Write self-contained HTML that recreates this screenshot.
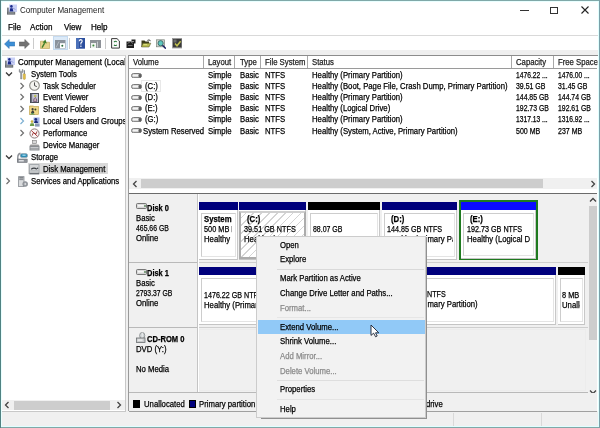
<!DOCTYPE html>
<html><head><meta charset="utf-8">
<style>
*{margin:0;padding:0;box-sizing:border-box}
html,body{width:600px;height:428px;overflow:hidden;background:#fff;font-family:"Liberation Sans",sans-serif;font-size:8.7px;color:#000}
.a{position:absolute}
.t{position:absolute;white-space:nowrap;line-height:10px;height:10px;transform-origin:0 0;transform:scaleX(.89);-webkit-text-stroke:0.25px currentColor}
.b{font-weight:bold}
.g{color:#8a8a8a}
</style></head><body>
<div class="a" style="left:0px;top:0px;width:600px;height:428px;background:#fff"></div>
<div class="t " style="left:20px;top:5.00px;transform:scaleX(0.890);font-size:9px;color:#222;-webkit-text-stroke:0">Computer Management</div>
<div class="a" style="left:520px;top:9.6px;width:8.5px;height:1.2px;background:#333"></div>
<div class="a" style="left:550px;top:6.5px;width:7.5px;height:7.5px;border:1.2px solid #333"></div>
<svg class="a" style="left:580.5px;top:6px" width="8" height="8"><path d="M0.5 0.5L7.5 7.5M7.5 0.5L0.5 7.5" stroke="#222" stroke-width="1.1"/></svg>
<div class="t " style="left:8px;top:22.40px;transform:scaleX(0.930);">File</div>
<div class="t " style="left:30px;top:22.40px;transform:scaleX(0.930);">Action</div>
<div class="t " style="left:64px;top:22.40px;transform:scaleX(0.930);">View</div>
<div class="t " style="left:91px;top:22.40px;transform:scaleX(0.930);">Help</div>
<div class="a" style="left:2px;top:35px;width:596px;height:1px;background:#d9d9d9"></div>
<div class="a" style="left:2px;top:50px;width:596px;height:5px;background:#efefef"></div>
<div class="a" style="left:2px;top:55px;width:596px;height:371px;background:#f0f0f0"></div>
<svg class="a" style="left:5.5px;top:4px" width="11" height="11" viewBox="0 0 11 11"><rect x="3" y="0.5" width="8" height="7.5" fill="#c9d0f6"/><circle cx="5.4" cy="2.4" r="1.3" fill="#1a2a8a"/><path d="M3.6 7.6L4.2 4.2L6.6 4.2L7.4 7.6Z" fill="#1a2a8a"/><path d="M6.6 4L9.5 5.5" stroke="#7a86c8" stroke-width="0.6"/><rect x="1" y="3.6" width="1.8" height="4.4" fill="#7a8088"/><rect x="1" y="7.8" width="8.2" height="2.8" fill="#62666c"/><rect x="1.8" y="8.6" width="6.6" height="0.8" fill="#b4b8bc"/></svg>
<svg class="a" style="left:3.5px;top:39px" width="11" height="10" viewBox="0 0 11 10"><path d="M0.5 5L5.2 0.5L5.2 3L10.8 3L10.8 7L5.2 7L5.2 9.5Z" fill="#3c8fd6" stroke="#2a6aa8" stroke-width="0.5"/></svg>
<svg class="a" style="left:19px;top:39px" width="11" height="10" viewBox="0 0 11 10"><path d="M10.5 5L5.8 0.5L5.8 3L0.2 3L0.2 7L5.8 7L5.8 9.5Z" fill="#727272" stroke="#5a5a5a" stroke-width="0.5"/></svg>
<div class="a" style="left:33.3px;top:37.6px;width:1.2px;height:11.4px;background:#cbcbcb"></div>
<svg class="a" style="left:39.8px;top:39px" width="10" height="10" viewBox="0 0 10 10"><path d="M0.5 2.2L3.8 2.2L4.8 3.2L9.5 3.2L9.5 9.5L0.5 9.5Z" fill="#e6d48a" stroke="#b8a050" stroke-width="0.6"/><path d="M2 8.6L4.6 4.2" stroke="#3f7f2a" stroke-width="1.4"/><path d="M2.6 3.6L5.4 0.6L6.8 4.6Z" fill="#3f7f2a"/></svg>
<div class="a" style="left:52.8px;top:36px;width:15px;height:14.2px;background:#dceaf8;border:1px solid #c4daf0"></div>
<svg class="a" style="left:55.2px;top:40px" width="10.5" height="8.5" viewBox="0 0 10.5 8.5"><rect x="0" y="0" width="10.5" height="8.5" fill="#8a929c"/><rect x="5" y="3.2" width="5" height="5" fill="#fff"/><circle cx="7.3" cy="5.8" r="1" fill="#2a6a3a"/><path d="M1 7.5L4 1.5" stroke="#b8c0c8" stroke-width="0.8"/></svg>
<div class="a" style="left:69.3px;top:37.6px;width:1.2px;height:11.4px;background:#cbcbcb"></div>
<svg class="a" style="left:76px;top:38px" width="9" height="10.7" viewBox="0 0 9 10.7"><rect x="0" y="0" width="9" height="10.7" fill="#2c4f9e"/><rect x="0" y="0" width="3" height="10.7" fill="#4a70b8"/><path d="M3.2 3.2Q3.4 1.6 4.8 1.6Q6.3 1.8 6.2 3.2Q6 4.2 4.9 5L4.9 6.6" fill="none" stroke="#fff" stroke-width="1.1"/><rect x="4.3" y="7.6" width="1.2" height="1.3" fill="#fff"/></svg>
<svg class="a" style="left:90px;top:40px" width="11" height="8.3" viewBox="0 0 11 8.3"><rect x="0" y="0" width="11" height="8.3" fill="#8e9298"/><rect x="1" y="3" width="5" height="5" fill="#f0f4f0"/><circle cx="3.4" cy="5.6" r="1" fill="#3a8a3a"/><rect x="7" y="1.6" width="1" height="6" fill="#c8ccd0"/></svg>
<div class="a" style="left:105.3px;top:38px;width:1.2px;height:11px;background:#cbcbcb"></div>
<svg class="a" style="left:111.3px;top:38px" width="9" height="10.7" viewBox="0 0 9 10.7"><path d="M0.6 0.6L6 0.6L8.4 3L8.4 10.1L0.6 10.1Z" fill="#fafafa" stroke="#3a3a3a" stroke-width="1"/><path d="M3 4Q4.4 2.6 5.8 3.8" fill="none" stroke="#2a7a3a" stroke-width="1.1"/><path d="M5.8 6.8Q4.4 8.2 3 7" fill="none" stroke="#2a7a3a" stroke-width="1.1"/></svg>
<svg class="a" style="left:126px;top:39px" width="10" height="9" viewBox="0 0 10 9"><rect x="0.5" y="2.5" width="7.5" height="6.5" fill="#1e1e1e"/><path d="M1.5 4.5L4.5 2.5L7 4.5" fill="none" stroke="#8a8a8a" stroke-width="0.8"/><rect x="2" y="6" width="4.5" height="1" fill="#6a6a6a"/><path d="M5.5 0.5L9.5 0.5L9.5 4.5L8 4.5L8 2L5.5 2Z" fill="#1e1e1e"/></svg>
<svg class="a" style="left:141.2px;top:39px" width="10.5" height="8.5" viewBox="0 0 10.5 8.5"><path d="M0.5 1.5L3.5 1.5L4.5 2.5L8 2.5L8 8L0.5 8Z" fill="#3a3a1a"/><path d="M1.8 4.2L9.8 4.2L8 8L0.5 8Z" fill="#b8bc50" stroke="#4a4a20" stroke-width="0.5"/><path d="M2.5 5.6L6 5.6" stroke="#e8e890" stroke-width="0.8"/><path d="M6.4 1.4Q8 0.2 9.6 1.8" fill="none" stroke="#2a2a2a" stroke-width="0.9"/></svg>
<svg class="a" style="left:155.9px;top:39px" width="10.5" height="10" viewBox="0 0 10.5 10"><rect x="0.5" y="0.8" width="8" height="7" fill="#cfd6cf" stroke="#7a827a" stroke-width="0.7"/><circle cx="4.6" cy="4.2" r="2.6" fill="#5cc8c0" stroke="#3a5a5a" stroke-width="0.8"/><path d="M6.5 6.2L9.8 9.6" stroke="#1a2060" stroke-width="1.5"/></svg>
<svg class="a" style="left:171.8px;top:38.2px" width="10.5" height="10.4" viewBox="0 0 10.5 10.4"><rect x="0.5" y="0.5" width="9.5" height="9.4" fill="#3a3a3a" stroke="#9a9a9a" stroke-width="1"/><rect x="1.5" y="1.5" width="3" height="3" fill="#6a6a6a"/><path d="M3 5.6L5 7.8L8.6 3.2" fill="none" stroke="#c0c050" stroke-width="1.5"/></svg>
<div class="a" style="left:2px;top:55px;width:124px;height:357px;background:#fff;border-top:1px solid #d4d4d4;border-right:1px solid #c8c8c8;border-bottom:1px solid #c8c8c8"></div>
<div class="a" style="left:2px;top:56px;width:123px;height:344px;overflow:hidden">
<div class="t " style="left:16px;top:0.70px;transform:scaleX(0.920);">Computer Management (Local</div>
<svg class="a" style="left:2px;top:1px" width="11" height="11" viewBox="0 0 11 11"><rect x="3" y="0.5" width="8" height="7.5" fill="#c9d0f6"/><circle cx="5.4" cy="2.4" r="1.3" fill="#1a2a8a"/><path d="M3.6 7.6L4.2 4.2L6.6 4.2L7.4 7.6Z" fill="#1a2a8a"/><path d="M6.6 4L9.5 5.5" stroke="#7a86c8" stroke-width="0.6"/><rect x="1" y="3.6" width="1.8" height="4.4" fill="#7a8088"/><rect x="1" y="7.8" width="8.2" height="2.8" fill="#62666c"/><rect x="1.8" y="8.6" width="6.6" height="0.8" fill="#b4b8bc"/></svg>
<div class="t " style="left:28.5px;top:12.60px;transform:scaleX(0.890);">System Tools</div>
<svg class="a" style="left:3.2px;top:14.6px" width="8" height="6"><path d="M1 1.5L4 4.5L7 1.5" fill="none" stroke="#3a3a3a" stroke-width="1.3"/></svg>
<svg class="a" style="left:15.5px;top:13px" width="8" height="11" viewBox="0 0 8 11"><path d="M1.2 0.5L1.2 3L2.6 4.2L2.6 10L3.8 10L3.8 4.2L5 3L5 0.5L4.2 0.5L4.2 2.4L2 2.4L2 0.5Z" fill="#9a9ea4" stroke="#6a6e74" stroke-width="0.4"/><rect x="5.2" y="4.6" width="2.2" height="5.8" rx="1" fill="#e3c24a" stroke="#a8862a" stroke-width="0.4"/><rect x="5.8" y="1.2" width="1" height="3.6" fill="#6a6e74"/></svg>
<div class="t " style="left:41px;top:24.50px;transform:scaleX(0.890);">Task Scheduler</div>
<svg class="a" style="left:17.2px;top:25.5px" width="6" height="8"><path d="M1.5 1L4.5 4L1.5 7" fill="none" stroke="#707070" stroke-width="1.2"/></svg>
<svg class="a" style="left:27px;top:24px" width="11" height="11" viewBox="0 0 11 11"><circle cx="5.5" cy="5.5" r="4.8" fill="#f4f4f0" stroke="#8a8a84" stroke-width="1.1"/><path d="M5.5 2.4L5.5 5.6L7.8 6.6" fill="none" stroke="#3a3a3a" stroke-width="0.9"/></svg>
<div class="t " style="left:41px;top:36.40px;transform:scaleX(0.890);">Event Viewer</div>
<svg class="a" style="left:17.2px;top:37.4px" width="6" height="8"><path d="M1.5 1L4.5 4L1.5 7" fill="none" stroke="#707070" stroke-width="1.2"/></svg>
<svg class="a" style="left:28px;top:37.2px" width="9" height="10" viewBox="0 0 9 10"><rect x="0.5" y="0.5" width="8" height="9" fill="#c4c6d8" stroke="#4a4e58" stroke-width="1"/><rect x="1" y="0.8" width="1.2" height="8.4" fill="#6a6e78"/><circle cx="5.2" cy="3" r="1.3" fill="#bcc060"/><path d="M3.6 8.6Q3.4 5.2 5.2 4.6Q7 5.2 6.8 8.6Z" fill="#c0b0b8" stroke="#6a4a6a" stroke-width="0.8"/></svg>
<div class="t " style="left:41px;top:48.30px;transform:scaleX(0.890);">Shared Folders</div>
<svg class="a" style="left:17.2px;top:49.3px" width="6" height="8"><path d="M1.5 1L4.5 4L1.5 7" fill="none" stroke="#707070" stroke-width="1.2"/></svg>
<svg class="a" style="left:26.7px;top:49px" width="10" height="10" viewBox="0 0 10 10"><rect x="0.5" y="1.5" width="9" height="8" fill="#efd88a" stroke="#b89a40" stroke-width="0.6"/><rect x="0.5" y="0.5" width="4" height="1.5" fill="#d8c070"/><circle cx="3.6" cy="4.2" r="1.1" fill="#3a3a3a"/><path d="M2 8L3 5.6L4.4 5.6L5.4 8Z" fill="#3a3a3a"/><circle cx="6.4" cy="4.6" r="1" fill="#3a4a2a"/><path d="M1 9.5L3.5 7.5L6 9.5Z" fill="#4a8a5a"/></svg>
<div class="t " style="left:41px;top:60.20px;transform:scaleX(0.890);">Local Users and Groups</div>
<svg class="a" style="left:17.2px;top:61.2px" width="6" height="8"><path d="M1.5 1L4.5 4L1.5 7" fill="none" stroke="#7db0d2" stroke-width="1.2"/></svg>
<svg class="a" style="left:27px;top:61px" width="11" height="10" viewBox="0 0 11 10"><rect x="4.5" y="0.5" width="6" height="5.5" fill="#9fb2e8"/><circle cx="6.8" cy="2.2" r="1.3" fill="#1a2a7a"/><path d="M5 6L6 3.6L8 3.6L9.2 6Z" fill="#1a2a7a"/><circle cx="3" cy="4.6" r="1.3" fill="#c9b040"/><path d="M0.8 9L1.6 6.2L4.6 6.2L5.4 9Z" fill="#6a9a4a"/><rect x="6" y="6.4" width="4.6" height="3.2" fill="#8a9ab8"/></svg>
<div class="t " style="left:41px;top:72.10px;transform:scaleX(0.890);">Performance</div>
<svg class="a" style="left:17.2px;top:73.1px" width="6" height="8"><path d="M1.5 1L4.5 4L1.5 7" fill="none" stroke="#707070" stroke-width="1.2"/></svg>
<svg class="a" style="left:27px;top:72px" width="11" height="11" viewBox="0 0 11 11"><circle cx="5.5" cy="5.5" r="4.6" fill="#fbf6f6" stroke="#8a7a7a" stroke-width="1"/><path d="M2.4 2.6L8.6 8.4" stroke="#b03a3a" stroke-width="1"/><path d="M3.2 7.6Q4.4 3 6 5.8Q7 7.4 8 3.4" fill="none" stroke="#8a2020" stroke-width="0.8"/></svg>
<div class="t " style="left:41px;top:84.00px;transform:scaleX(0.890);">Device Manager</div>
<svg class="a" style="left:27px;top:84px" width="11" height="11" viewBox="0 0 11 11"><rect x="3.5" y="0.5" width="4" height="3" fill="#d8d8d8" stroke="#7a7a7a" stroke-width="0.6"/><path d="M1.5 4.5L9.5 4.5L10.5 6L0.5 6Z" fill="#9a9a9a"/><rect x="0.5" y="6" width="10" height="4.5" fill="#8a8e92"/><rect x="1.5" y="7" width="8" height="0.8" fill="#d8dadc"/><rect x="1.5" y="8.6" width="8" height="0.8" fill="#c8cacc"/></svg>
<div class="t " style="left:28.5px;top:95.90px;transform:scaleX(0.890);">Storage</div>
<svg class="a" style="left:3.2px;top:97.9px" width="8" height="6"><path d="M1 1.5L4 4.5L7 1.5" fill="none" stroke="#3a3a3a" stroke-width="1.3"/></svg>
<svg class="a" style="left:14.5px;top:96px" width="11" height="11" viewBox="0 0 11 11"><path d="M3.5 1.2Q0.8 1.8 0.8 5L0.8 10.2" fill="none" stroke="#8a8e94" stroke-width="1.4"/><rect x="0.6" y="7" width="9.6" height="3.6" fill="#8e9298" stroke="#6a6e74" stroke-width="0.5"/><rect x="1.8" y="8.2" width="5" height="1.2" fill="#f0f2f4"/><rect x="3.2" y="1.6" width="7.4" height="4" rx="1.9" fill="#2d8cb4" stroke="#9aa4ac" stroke-width="0.7"/><rect x="5.4" y="2.6" width="3.2" height="1.2" fill="#a8e0f4"/></svg>
<div class="a" style="left:26px;top:107.3px;width:80px;height:11px;background:#d9d9d9"></div>
<div class="t " style="left:41px;top:107.80px;transform:scaleX(0.890);">Disk Management</div>
<svg class="a" style="left:27px;top:108px" width="10.5" height="10.5" viewBox="0 0 10.5 10.5"><rect x="0.6" y="0.6" width="9.4" height="9.4" fill="#d4d6d8" stroke="#9a9ea4" stroke-width="0.8"/><path d="M2.2 5.2Q5 3.2 7.8 5.2" fill="none" stroke="#3a3e44" stroke-width="1.2"/><rect x="1.2" y="6.4" width="8.2" height="1" fill="#a8acb0"/><rect x="0.6" y="8.8" width="9.4" height="1.4" fill="#6a6e74"/><circle cx="8.6" cy="4.2" r="0.7" fill="#3a3e44"/></svg>
<div class="t " style="left:28.5px;top:119.70px;transform:scaleX(0.890);">Services and Applications</div>
<svg class="a" style="left:3.2px;top:120.7px" width="6" height="8"><path d="M1.5 1L4.5 4L1.5 7" fill="none" stroke="#707070" stroke-width="1.2"/></svg>
<svg class="a" style="left:15.8px;top:119.6px" width="10" height="11" viewBox="0 0 10 11"><rect x="0.6" y="0.6" width="5.4" height="10" fill="#dadcde" stroke="#8a8e94" stroke-width="0.8"/><rect x="1.2" y="1.4" width="4.2" height="1" fill="#4a4e54"/><rect x="1.2" y="3.2" width="4.2" height="0.9" fill="#7a7e84"/><circle cx="7.2" cy="8" r="2.5" fill="#9a9ea4" stroke="#7a7e84" stroke-width="0.5"/><circle cx="7.2" cy="8" r="0.8" fill="#fff"/></svg>
</div>
<div class="a" style="left:2px;top:400px;width:123px;height:10px;background:#f0f0f0"></div>
<div class="a" style="left:13.5px;top:400.5px;width:96px;height:9px;background:#cdcdcd"></div>
<svg class="a" style="left:4px;top:401px" width="6" height="8"><path d="M4.5 1L1.5 4L4.5 7" fill="none" stroke="#444" stroke-width="1.3"/></svg>
<svg class="a" style="left:116px;top:401px" width="6" height="8"><path d="M1.5 1L4.5 4L1.5 7" fill="none" stroke="#444" stroke-width="1.3"/></svg>
<div class="a" style="left:128px;top:55px;width:470px;height:356px;background:#fff;border-top:1px solid #8c8c8c;border-left:1px solid #9a9a9a"></div>
<div class="a" style="left:0;top:0;width:600px;height:428px;clip-path:inset(56px 2.4px 16px 129px)">
<div class="a" style="left:129px;top:67.5px;width:468px;height:1px;background:#9a9a9a"></div>
<div class="a" style="left:203px;top:56px;width:1px;height:12px;background:#a8a8a8"></div>
<div class="a" style="left:234px;top:56px;width:1px;height:12px;background:#a8a8a8"></div>
<div class="a" style="left:260px;top:56px;width:1px;height:12px;background:#a8a8a8"></div>
<div class="a" style="left:307px;top:56px;width:1px;height:12px;background:#a8a8a8"></div>
<div class="a" style="left:511px;top:56px;width:1px;height:12px;background:#a8a8a8"></div>
<div class="a" style="left:553px;top:56px;width:1px;height:12px;background:#a8a8a8"></div>
<div class="t " style="left:133px;top:57.30px;transform:scaleX(0.890);color:#222">Volume</div>
<div class="t " style="left:207.5px;top:57.30px;transform:scaleX(0.890);color:#222">Layout</div>
<div class="t " style="left:240px;top:57.30px;transform:scaleX(0.890);color:#222">Type</div>
<div class="t " style="left:265px;top:57.30px;transform:scaleX(0.890);color:#222">File System</div>
<div class="t " style="left:312px;top:57.30px;transform:scaleX(0.890);color:#222">Status</div>
<div class="t " style="left:516px;top:57.30px;transform:scaleX(0.890);color:#222">Capacity</div>
<div class="t " style="left:558px;top:57.30px;transform:scaleX(0.890);color:#222">Free Space</div>
<div class="a" style="left:141px;top:80px;width:20px;height:11.5px;border:1px solid #e8e8e8"></div>
<svg class="a" style="left:130.8px;top:72.7px" width="11" height="5" viewBox="0 0 11 5"><rect x="0.5" y="0.5" width="10" height="4.2" rx="2" fill="#cfcfcf" stroke="#6e6e6e" stroke-width="0.9"/><rect x="2" y="1.6" width="5" height="1.6" fill="#f4f4f4"/><rect x="7.6" y="1" width="2.6" height="3.4" rx="1" fill="#5e5e5e"/></svg>
<div class="t " style="left:207.5px;top:70.00px;transform:scaleX(0.890);">Simple</div>
<div class="t " style="left:240px;top:70.00px;transform:scaleX(0.890);">Basic</div>
<div class="t " style="left:265px;top:70.00px;transform:scaleX(0.890);">NTFS</div>
<div class="t " style="left:312px;top:70.00px;transform:scaleX(0.890);">Healthy (Primary Partition)</div>
<div class="t " style="left:516px;top:70.00px;transform:scaleX(0.770);">1476.22 ...</div>
<div class="t " style="left:558px;top:70.00px;transform:scaleX(0.770);">1476.00 ...</div>
<svg class="a" style="left:130.8px;top:83.8px" width="11" height="5" viewBox="0 0 11 5"><rect x="0.5" y="0.5" width="10" height="4.2" rx="2" fill="#cfcfcf" stroke="#6e6e6e" stroke-width="0.9"/><rect x="2" y="1.6" width="5" height="1.6" fill="#f4f4f4"/><rect x="7.6" y="1" width="2.6" height="3.4" rx="1" fill="#5e5e5e"/></svg>
<div class="t " style="left:144.5px;top:81.10px;transform:scaleX(0.890);">(C:)</div>
<div class="t " style="left:207.5px;top:81.10px;transform:scaleX(0.890);">Simple</div>
<div class="t " style="left:240px;top:81.10px;transform:scaleX(0.890);">Basic</div>
<div class="t " style="left:265px;top:81.10px;transform:scaleX(0.890);">NTFS</div>
<div class="t " style="left:312px;top:81.10px;transform:scaleX(0.890);">Healthy (Boot, Page File, Crash Dump, Primary Partition)</div>
<div class="t " style="left:516px;top:81.10px;transform:scaleX(0.800);">39.51 GB</div>
<div class="t " style="left:558px;top:81.10px;transform:scaleX(0.800);">31.45 GB</div>
<svg class="a" style="left:130.8px;top:94.9px" width="11" height="5" viewBox="0 0 11 5"><rect x="0.5" y="0.5" width="10" height="4.2" rx="2" fill="#cfcfcf" stroke="#6e6e6e" stroke-width="0.9"/><rect x="2" y="1.6" width="5" height="1.6" fill="#f4f4f4"/><rect x="7.6" y="1" width="2.6" height="3.4" rx="1" fill="#5e5e5e"/></svg>
<div class="t " style="left:144.5px;top:92.20px;transform:scaleX(0.890);">(D:)</div>
<div class="t " style="left:207.5px;top:92.20px;transform:scaleX(0.890);">Simple</div>
<div class="t " style="left:240px;top:92.20px;transform:scaleX(0.890);">Basic</div>
<div class="t " style="left:265px;top:92.20px;transform:scaleX(0.890);">NTFS</div>
<div class="t " style="left:312px;top:92.20px;transform:scaleX(0.890);">Healthy (Primary Partition)</div>
<div class="t " style="left:516px;top:92.20px;transform:scaleX(0.791);">144.85 GB</div>
<div class="t " style="left:558px;top:92.20px;transform:scaleX(0.791);">144.74 GB</div>
<svg class="a" style="left:130.8px;top:106.0px" width="11" height="5" viewBox="0 0 11 5"><rect x="0.5" y="0.5" width="10" height="4.2" rx="2" fill="#cfcfcf" stroke="#6e6e6e" stroke-width="0.9"/><rect x="2" y="1.6" width="5" height="1.6" fill="#f4f4f4"/><rect x="7.6" y="1" width="2.6" height="3.4" rx="1" fill="#5e5e5e"/></svg>
<div class="t " style="left:144.5px;top:103.30px;transform:scaleX(0.890);">(E:)</div>
<div class="t " style="left:207.5px;top:103.30px;transform:scaleX(0.890);">Simple</div>
<div class="t " style="left:240px;top:103.30px;transform:scaleX(0.890);">Basic</div>
<div class="t " style="left:265px;top:103.30px;transform:scaleX(0.890);">NTFS</div>
<div class="t " style="left:312px;top:103.30px;transform:scaleX(0.890);">Healthy (Logical Drive)</div>
<div class="t " style="left:516px;top:103.30px;transform:scaleX(0.791);">192.73 GB</div>
<div class="t " style="left:558px;top:103.30px;transform:scaleX(0.791);">192.61 GB</div>
<svg class="a" style="left:130.8px;top:117.1px" width="11" height="5" viewBox="0 0 11 5"><rect x="0.5" y="0.5" width="10" height="4.2" rx="2" fill="#cfcfcf" stroke="#6e6e6e" stroke-width="0.9"/><rect x="2" y="1.6" width="5" height="1.6" fill="#f4f4f4"/><rect x="7.6" y="1" width="2.6" height="3.4" rx="1" fill="#5e5e5e"/></svg>
<div class="t " style="left:144.5px;top:114.40px;transform:scaleX(0.890);">(G:)</div>
<div class="t " style="left:207.5px;top:114.40px;transform:scaleX(0.890);">Simple</div>
<div class="t " style="left:240px;top:114.40px;transform:scaleX(0.890);">Basic</div>
<div class="t " style="left:265px;top:114.40px;transform:scaleX(0.890);">NTFS</div>
<div class="t " style="left:312px;top:114.40px;transform:scaleX(0.890);">Healthy (Primary Partition)</div>
<div class="t " style="left:516px;top:114.40px;transform:scaleX(0.770);">1317.13 ...</div>
<div class="t " style="left:558px;top:114.40px;transform:scaleX(0.770);">1316.92 ...</div>
<svg class="a" style="left:130.8px;top:128.2px" width="11" height="5" viewBox="0 0 11 5"><rect x="0.5" y="0.5" width="10" height="4.2" rx="2" fill="#cfcfcf" stroke="#6e6e6e" stroke-width="0.9"/><rect x="2" y="1.6" width="5" height="1.6" fill="#f4f4f4"/><rect x="7.6" y="1" width="2.6" height="3.4" rx="1" fill="#5e5e5e"/></svg>
<div class="t " style="left:143px;top:125.50px;transform:scaleX(0.890);">System Reserved</div>
<div class="t " style="left:207.5px;top:125.50px;transform:scaleX(0.890);">Simple</div>
<div class="t " style="left:240px;top:125.50px;transform:scaleX(0.890);">Basic</div>
<div class="t " style="left:265px;top:125.50px;transform:scaleX(0.890);">NTFS</div>
<div class="t " style="left:312px;top:125.50px;transform:scaleX(0.890);">Healthy (System, Active, Primary Partition)</div>
<div class="t " style="left:516px;top:125.50px;transform:scaleX(0.808);">500 MB</div>
<div class="t " style="left:558px;top:125.50px;transform:scaleX(0.808);">237 MB</div>
<div class="a" style="left:129px;top:178px;width:468px;height:11px;background:#f0f0f0"></div>
<div class="a" style="left:141px;top:178.5px;width:402px;height:9px;background:#cdcdcd"></div>
<svg class="a" style="left:132px;top:180px" width="6" height="8"><path d="M4.5 1L1.5 4L4.5 7" fill="none" stroke="#444" stroke-width="1.3"/></svg>
<svg class="a" style="left:590px;top:180px" width="6" height="8"><path d="M1.5 1L4.5 4L1.5 7" fill="none" stroke="#444" stroke-width="1.3"/></svg>
<div class="a" style="left:129px;top:193px;width:468px;height:1px;background:#6b6b6b"></div>
<div class="a" style="left:129px;top:194px;width:459px;height:199px;background:#f0f0f0"></div>
<div class="a" style="left:588px;top:194px;width:9px;height:199px;background:#f0f0f0"></div>
<div class="a" style="left:588.5px;top:206px;width:8px;height:134px;background:#cdcdcd"></div>
<svg class="a" style="left:589px;top:197px" width="8" height="6"><path d="M1 4.5L4 1.5L7 4.5" fill="none" stroke="#444" stroke-width="1.3"/></svg>
<svg class="a" style="left:589px;top:389px" width="8" height="6"><path d="M1 1.5L4 4.5L7 1.5" fill="none" stroke="#444" stroke-width="1.3"/></svg>
<div class="a" style="left:129px;top:261.5px;width:69px;height:1px;background:#b9b9b9"></div>
<div class="a" style="left:198px;top:261.5px;width:390px;height:1px;background:#cfcfcf"></div>
<div class="a" style="left:129px;top:326.5px;width:69px;height:1px;background:#b9b9b9"></div>
<div class="a" style="left:198px;top:326.5px;width:390px;height:1px;background:#cfcfcf"></div>
<div class="a" style="left:129px;top:392px;width:69px;height:1px;background:#b9b9b9"></div>
<div class="a" style="left:198px;top:392px;width:390px;height:1px;background:#b9b9b9"></div>
<div class="a" style="left:197px;top:194px;width:1px;height:198px;background:#c4c4c4"></div>
<div class="a" style="left:198px;top:194px;width:1px;height:198px;background:#fff"></div>
<div class="t b" style="left:147px;top:202.50px;transform:scaleX(0.858);">Disk 0</div>
<div class="t " style="left:136px;top:213.00px;transform:scaleX(0.890);">Basic</div>
<div class="t " style="left:136px;top:222.80px;transform:scaleX(0.791);">465.66 GB</div>
<div class="t " style="left:136px;top:232.60px;transform:scaleX(0.890);">Online</div>
<svg class="a" style="left:135.9px;top:203.2px" width="11" height="6" viewBox="0 0 11 6"><rect x="0.5" y="0.5" width="10" height="5" rx="1" fill="#d6d6d6" stroke="#6a6a6a" stroke-width="0.9"/><rect x="1.8" y="1.8" width="6" height="1.8" fill="#f6f6f6"/><circle cx="9" cy="3" r="0.9" fill="#5a8a5a"/></svg>
<div class="t b" style="left:147px;top:268.00px;transform:scaleX(0.858);">Disk 1</div>
<div class="t " style="left:136px;top:278.00px;transform:scaleX(0.890);">Basic</div>
<div class="t " style="left:136px;top:288.00px;transform:scaleX(0.784);">2793.37 GB</div>
<div class="t " style="left:136px;top:298.00px;transform:scaleX(0.890);">Online</div>
<svg class="a" style="left:135.9px;top:268.7px" width="11" height="6" viewBox="0 0 11 6"><rect x="0.5" y="0.5" width="10" height="5" rx="1" fill="#d6d6d6" stroke="#6a6a6a" stroke-width="0.9"/><rect x="1.8" y="1.8" width="6" height="1.8" fill="#f6f6f6"/><circle cx="9" cy="3" r="0.9" fill="#5a8a5a"/></svg>
<div class="t b" style="left:147px;top:333.80px;transform:scaleX(0.871);">CD-ROM 0</div>
<div class="t " style="left:136px;top:343.50px;transform:scaleX(0.890);">DVD (Y:)</div>
<div class="t " style="left:136px;top:363.50px;transform:scaleX(0.890);">No Media</div>
<svg class="a" style="left:135.8px;top:331.5px" width="10" height="11" viewBox="0 0 10 11"><ellipse cx="6.2" cy="3.6" rx="2.6" ry="3.2" fill="#cfd4d6" stroke="#7a7e80" stroke-width="0.7"/><rect x="5.8" y="0.6" width="0.8" height="5" fill="#f4f4f4"/><rect x="0.5" y="6" width="8.5" height="4.5" fill="#c8cacc" stroke="#6a6e70" stroke-width="0.8"/><rect x="1.6" y="7.4" width="5" height="1.4" fill="#f2f2f2"/></svg>
<div class="a" style="left:199px;top:201.5px;width:38.5px;height:8px;background:#00007c"></div>
<div class="a" style="left:199px;top:209.5px;width:38.5px;height:50.0px;background:#fff;border-right:1px solid #c8c8c8;border-bottom:1px solid #c4c4c4"></div>
<div class="a" style="left:201px;top:212.5px;width:34.5px;height:44.0px;background:#fff;border:1px solid #e4e4e4;border-top-color:#cdcdcd;border-left-color:#cdcdcd">
<div class="a" style="left:0;top:0;width:29.5px;height:42.0px;overflow:hidden">
<div class="t b" style="left:1.6px;top:0.80px;transform:scaleX(0.890);">System</div>
<div class="t " style="left:1.6px;top:10.50px;transform:scaleX(0.845);">500 MB NTFS</div>
<div class="t " style="left:1.6px;top:20.50px;transform:scaleX(0.890);">Healthy (System, Active, Primary Partition)</div>
</div></div>
<div class="a" style="left:239px;top:201.5px;width:67px;height:8px;background:#00007c"></div>
<div class="a" style="left:239px;top:209.5px;width:67px;height:50.0px;background:#fff;border-right:1px solid #c8c8c8;border-bottom:1px solid #c4c4c4"></div>
<div class="a" style="left:239px;top:210.5px;width:67px;height:48.0px;background:repeating-linear-gradient(-45deg,#fff 0,#fff 4.6px,#d4d4d4 4.6px,#d4d4d4 5.6px);border:2px solid #acacac;border-top-color:#cfcfcf">
<div class="a" style="left:0;top:0;width:61.5px;height:44.0px;overflow:hidden">
<div class="t b" style="left:6.2px;top:1.80px;transform:scaleX(0.890);">(C:)</div>
<div class="t " style="left:3px;top:11.50px;transform:scaleX(0.837);">39.51 GB NTFS</div>
<div class="t " style="left:3px;top:21.50px;transform:scaleX(0.890);">Healthy (Boot, Page File, Crash Dump, Primary Partition)</div>
</div></div>
<div class="a" style="left:308px;top:201.5px;width:72px;height:8px;background:#000"></div>
<div class="a" style="left:308px;top:209.5px;width:72px;height:50.0px;background:#fff;border-right:1px solid #c8c8c8;border-bottom:1px solid #c4c4c4"></div>
<div class="a" style="left:310px;top:212.5px;width:68px;height:44.0px;background:#fff;border:1px solid #e4e4e4;border-top-color:#cdcdcd;border-left-color:#cdcdcd">
<div class="a" style="left:0;top:0;width:64.5px;height:42.0px;overflow:hidden">
<div class="t " style="left:1.8px;top:10.50px;transform:scaleX(0.800);">88.07 GB</div>
</div></div>
<div class="a" style="left:382px;top:201.5px;width:75px;height:8px;background:#00007c"></div>
<div class="a" style="left:382px;top:209.5px;width:75px;height:50.0px;background:#fff;border-right:1px solid #c8c8c8;border-bottom:1px solid #c4c4c4"></div>
<div class="a" style="left:384px;top:212.5px;width:71px;height:44.0px;background:#fff;border:1px solid #e4e4e4;border-top-color:#cdcdcd;border-left-color:#cdcdcd">
<div class="a" style="left:0;top:0;width:67.5px;height:42.0px;overflow:hidden">
<div class="t b" style="left:6px;top:0.80px;transform:scaleX(0.890);">(D:)</div>
<div class="t " style="left:2px;top:10.50px;transform:scaleX(0.828);">144.85 GB NTFS</div>
<div class="t " style="left:2px;top:20.50px;transform:scaleX(0.890);">Healthy (Primary Partition)</div>
</div></div>
<div class="a" style="left:459px;top:200px;width:79px;height:60px;border:2px solid #1f7a1f;background:#fff"></div>
<div class="a" style="left:461px;top:202px;width:75px;height:8px;background:#0a0aff"></div>
<div class="a" style="left:461px;top:210px;width:75px;height:49px;background:#fff;border-right:1px solid #c8c8c8;border-bottom:1px solid #c4c4c4"></div>
<div class="a" style="left:463px;top:213px;width:71px;height:43px;background:#fff;border:1px solid #e4e4e4;border-top-color:#cdcdcd;border-left-color:#cdcdcd">
<div class="a" style="left:0;top:0;width:65.5px;height:41px;overflow:hidden">
<div class="t b" style="left:6px;top:0.30px;transform:scaleX(0.890);">(E:)</div>
<div class="t " style="left:3px;top:10.00px;transform:scaleX(0.828);">192.73 GB NTFS</div>
<div class="t " style="left:3px;top:20.00px;transform:scaleX(0.890);">Healthy (Logical Drive)</div>
</div></div>
<div class="a" style="left:199px;top:267px;width:181px;height:8px;background:#00007c"></div>
<div class="a" style="left:199px;top:275px;width:181px;height:49.5px;background:#fff;border-right:1px solid #c8c8c8;border-bottom:1px solid #c4c4c4"></div>
<div class="a" style="left:201px;top:278px;width:177px;height:43.5px;background:#fff;border:1px solid #e4e4e4;border-top-color:#cdcdcd;border-left-color:#cdcdcd">
<div class="a" style="left:0;top:0;width:173.5px;height:41.5px;overflow:hidden">
<div class="t " style="left:2px;top:10.60px;transform:scaleX(0.821);">1476.22 GB NTFS</div>
<div class="t " style="left:2px;top:20.50px;transform:scaleX(0.890);">Healthy (Primary Partition)</div>
</div></div>
<div class="a" style="left:382px;top:267px;width:174px;height:8px;background:#00007c"></div>
<div class="a" style="left:382px;top:275px;width:174px;height:49.5px;background:#fff;border-right:1px solid #c8c8c8;border-bottom:1px solid #c4c4c4"></div>
<div class="a" style="left:384px;top:278px;width:170px;height:43.5px;background:#fff;border:1px solid #e4e4e4;border-top-color:#cdcdcd;border-left-color:#cdcdcd">
<div class="a" style="left:0;top:0;width:166.5px;height:41.5px;overflow:hidden">
<div class="t b" style="left:6px;top:0.50px;transform:scaleX(0.890);">(G:)</div>
<div class="t " style="left:1.6px;top:10.40px;transform:scaleX(0.821);">1317.13 GB NTFS</div>
<div class="t " style="left:1.6px;top:20.20px;transform:scaleX(0.890);">Healthy (Primary Partition)</div>
</div></div>
<div class="a" style="left:558px;top:267px;width:26.5px;height:8px;background:#000"></div>
<div class="a" style="left:558px;top:275px;width:26.5px;height:49.5px;background:#fff;border-right:1px solid #c8c8c8;border-bottom:1px solid #c4c4c4"></div>
<div class="a" style="left:560px;top:278px;width:22.5px;height:43.5px;background:#fff;border:1px solid #e4e4e4;border-top-color:#cdcdcd;border-left-color:#cdcdcd">
<div class="a" style="left:0;top:0;width:19.0px;height:41.5px;overflow:hidden">
<div class="t " style="left:1px;top:10.50px;transform:scaleX(0.849);">8 MB</div>
<div class="t " style="left:1px;top:20.50px;transform:scaleX(0.890);">Unallocated</div>
</div></div>
<div class="a" style="left:199px;top:329px;width:387px;height:62px;border:1px solid #ececec"></div>
<div class="a" style="left:129px;top:393px;width:468px;height:18px;background:#f0f0f0"></div>
<div class="a" style="left:129px;top:410.5px;width:468px;height:1px;background:#a0a0a0"></div>
<div class="a" style="left:133px;top:400px;width:7px;height:8px;background:#000"></div>
<div class="t " style="left:143.6px;top:399.00px;transform:scaleX(0.890);">Unallocated</div>
<div class="a" style="left:189px;top:400px;width:6.5px;height:8px;background:#00007c;border:1px solid #000"></div>
<div class="t " style="left:199px;top:399.00px;transform:scaleX(0.890);">Primary partition</div>
<div class="t " style="left:426px;top:399.00px;transform:scaleX(0.890);">drive</div>
</div>
<div class="a" style="left:453px;top:413px;width:1px;height:13px;background:#d9d9d9"></div>
<div class="a" style="left:541px;top:413px;width:1px;height:13px;background:#d9d9d9"></div>
<div class="a" style="left:0px;top:0px;width:600px;height:1px;background:#80a8a8"></div>
<div class="a" style="left:0px;top:427px;width:600px;height:1px;background:#80a8a8"></div>
<div class="a" style="left:0px;top:0px;width:1px;height:428px;background:#508282"></div>
<div class="a" style="left:599px;top:0px;width:1px;height:428px;background:#7aa0a8"></div>
<div class="a" style="left:1px;top:1px;width:598px;height:1px;background:#e8ffff"></div>
<div class="a" style="left:1px;top:426px;width:598px;height:1px;background:#e0ffff"></div>
<div class="a" style="left:1px;top:1px;width:1px;height:426px;background:#e8ffff"></div>
<div class="a" style="left:598px;top:1px;width:1px;height:426px;background:#e0ffff"></div>
<div class="a" style="left:260.5px;top:237px;width:166.8px;height:181.6px;background:#909090;filter:blur(0.4px)"></div>
<div class="a" style="left:256.3px;top:236.2px;width:170.2px;height:181.4px;background:#f2f2f2;border:1px solid #cccccc"></div>
<div class="a" style="left:258.4px;top:320px;width:167px;height:13.5px;background:#91c9f7"></div>
<div class="t " style="left:280px;top:240.30px;transform:scaleX(0.890);">Open</div>
<div class="t " style="left:280px;top:254.40px;transform:scaleX(0.890);">Explore</div>
<div class="t " style="left:280px;top:273.30px;transform:scaleX(0.890);">Mark Partition as Active</div>
<div class="t " style="left:280px;top:288.30px;transform:scaleX(0.890);">Change Drive Letter and Paths...</div>
<div class="t g" style="left:280px;top:302.80px;transform:scaleX(0.890);">Format...</div>
<div class="t " style="left:280px;top:322.00px;transform:scaleX(0.890);">Extend Volume...</div>
<div class="t " style="left:280px;top:336.20px;transform:scaleX(0.890);">Shrink Volume...</div>
<div class="t g" style="left:280px;top:351.00px;transform:scaleX(0.890);">Add Mirror...</div>
<div class="t g" style="left:280px;top:365.70px;transform:scaleX(0.890);">Delete Volume...</div>
<div class="t " style="left:280px;top:384.00px;transform:scaleX(0.890);">Properties</div>
<div class="t " style="left:280px;top:403.70px;transform:scaleX(0.890);">Help</div>
<div class="a" style="left:277px;top:268.8px;width:147px;height:1px;background:#d9d9d9"></div>
<div class="a" style="left:277px;top:317.3px;width:147px;height:1px;background:#e6e6e6"></div>
<div class="a" style="left:277px;top:379.5px;width:147px;height:1px;background:#dedede"></div>
<div class="a" style="left:277px;top:399px;width:147px;height:1px;background:#e4e4e4"></div>
<svg class="a" style="left:370.4px;top:324px" width="10" height="14"><path d="M1 1L1 11.4L3.6 9.2L5.6 12.8L7.2 12L5.5 8.8L8.8 8.8Z" fill="#fff" stroke="#1a2030" stroke-width="0.9" stroke-linejoin="round"/></svg>
</body></html>
